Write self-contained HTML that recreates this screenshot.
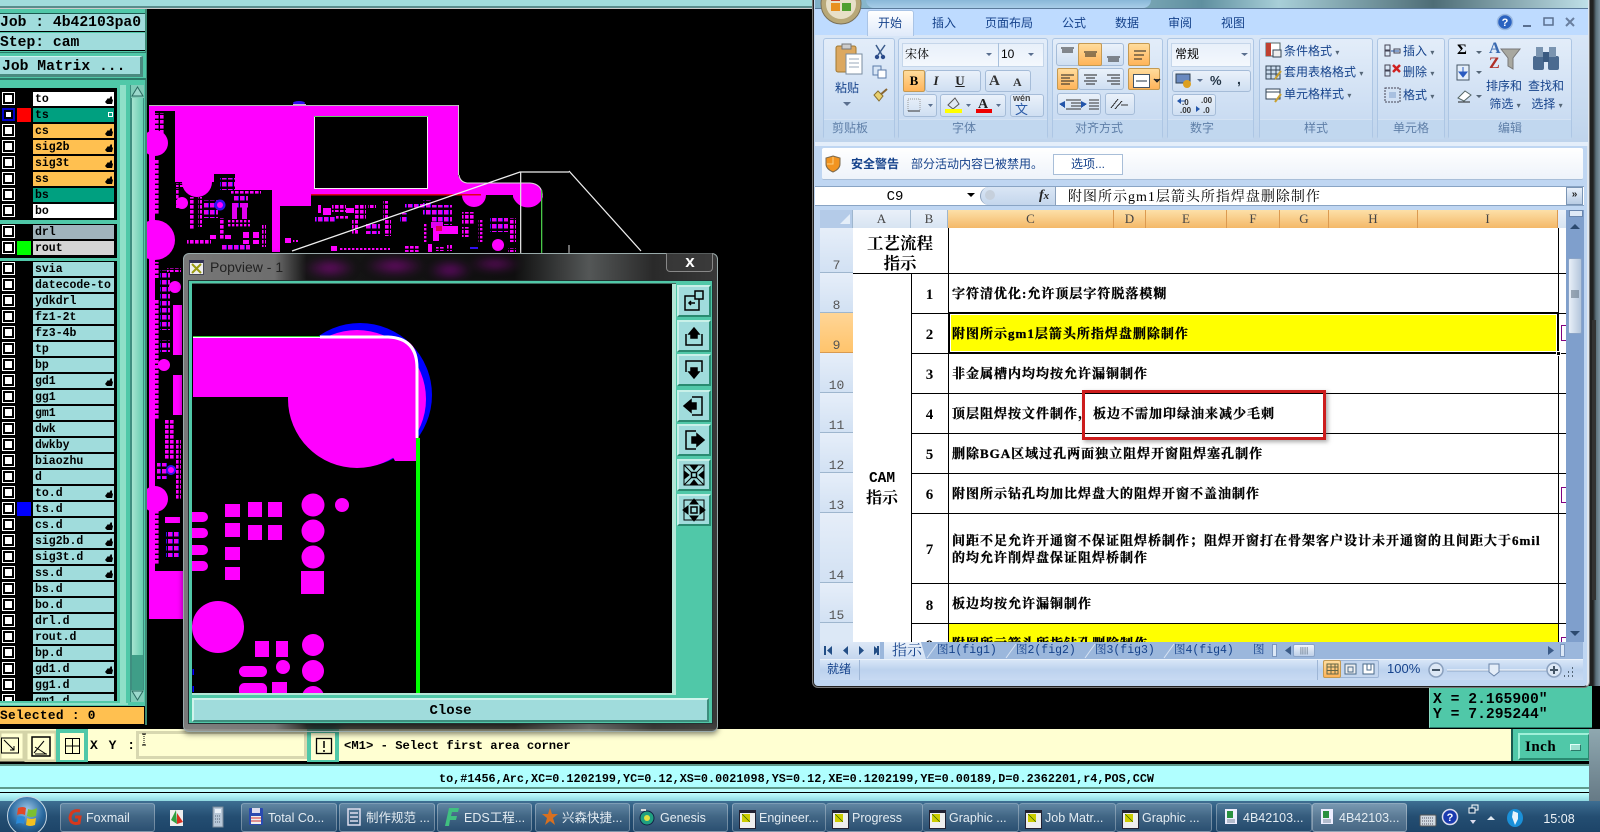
<!DOCTYPE html>
<html><head><meta charset="utf-8"><title>Genesis CAM</title>
<style>
html,body{margin:0;padding:0;background:#000;width:1600px;height:832px;overflow:hidden}
div,span,svg{position:absolute;white-space:nowrap;box-sizing:border-box}
.m{font-family:"Liberation Mono",monospace;font-weight:bold;color:#000}
.cell{font-family:"Liberation Serif","Noto Serif CJK SC",serif;font-weight:bold;font-size:13px;letter-spacing:1px;color:#000;line-height:16px;-webkit-text-stroke:.3px #000;margin-top:2px}
.ui{font-family:"Liberation Sans","Noto Sans CJK SC",sans-serif;font-size:12px;color:#15428b;line-height:16px}
.ctr{transform:translateX(-50%)}
.r{left:33px;width:81px;height:14px;background:#a0dcdc;font:bold 11.5px/15px "Liberation Mono",monospace;padding-left:2px;color:#000}
.c{left:2px;width:13px;height:13px;background:#fff}
.c:after{content:"";position:absolute;left:1px;top:1px;width:11px;height:11px;border:2px solid #000;box-sizing:border-box;background:#fff}
.c.bl{background:#00c}
.c.bl:after{left:2px;top:2px;width:9px;height:9px;background:#fff;border-color:#000}
.s{left:17px;width:14px;height:14px}
.rh{left:820px;width:33px;background:linear-gradient(#e6eef9,#d2e1f3);border-bottom:1px solid #9eb6ce;font:13px/14px "Liberation Mono",monospace;color:#555;text-align:center}
.rh span{position:absolute;bottom:0;left:0;width:33px;text-align:center}
.ch{top:210px;height:18px;border-right:1px solid #dc9a50;background:linear-gradient(#fde0a8,#f4b868);font:13px/18px "Liberation Serif",serif;color:#444;text-align:center}
.hl{left:911px;width:655px;height:1px;background:#000}
.num{left:911px;width:37px;text-align:center;font:bold 15px/18px "Liberation Serif",serif;color:#000;margin-top:2px}
.g{top:38px;height:101px;border:1px solid #adc6e4;border-radius:3px;background:linear-gradient(#e3edf9,#cadcf2 80%)}
.gl{top:119px;height:20px;background:#c1d7ef;border-top:1px solid #d4e2f3}
.gt{top:120px;color:#5f7fa8}
.b{background:linear-gradient(#eaf1fa,#cfdff2);border:1px solid #a5bcd8;border-radius:3px}
.o{background:linear-gradient(#ffdc9c,#ffb45a);border:1px solid #c59a52;border-radius:2px}
.tb{top:803px;height:29px;border:1px solid rgba(255,255,255,.3);border-radius:3px;background:linear-gradient(rgba(255,255,255,.2),rgba(255,255,255,.06));font:12.5px/28px "Liberation Sans","Noto Sans CJK SC",sans-serif;color:#e4ecf2;padding-left:26px;overflow:hidden}
.tb i{position:absolute;left:6px;top:6px;width:15px;height:15px;display:block}
.x{background:#eee;border:1px solid #223;border-top:3px solid #223}
.x:after{content:"";position:absolute;left:2px;top:1px;width:8px;height:8px;background:linear-gradient(45deg,#cc0 45%,#250 50%,#cc0 55%)}
.p{left:677px;width:34px;height:32px;background:#a0dcdc;border:2px solid;border-color:#c8f0e8 #2a8a70 #2a8a70 #c8f0e8}
.p svg{left:2px;top:1px;width:26px;height:26px}
.tabtxt{top:642px;font:11.5px/17px "Liberation Mono","Noto Serif CJK SC",serif;color:#15428b}
</style></head><body>

<!-- top strip -->
<div style="left:0;top:0;width:814px;height:6px;background:#a0dcdc"></div>
<div style="left:0;top:6px;width:814px;height:2px;background:#5a8c8c"></div>
<div style="left:0;top:8px;width:814px;height:1px;background:#ccc"></div>

<!-- PCB -->
<svg style="left:0;top:0" width="1600" height="832" viewBox="0 0 1600 832">
<defs>
<pattern id="d1" width="5" height="5" patternUnits="userSpaceOnUse"><rect width="3.6" height="3.6" fill="#f0f"/></pattern>
<pattern id="d2" width="6" height="7" patternUnits="userSpaceOnUse"><rect width="4" height="4.5" fill="#e800f0"/><rect x="4" width="1" height="4.5" fill="#3010f0"/></pattern>
<pattern id="d3" width="4" height="4" patternUnits="userSpaceOnUse"><rect width="2.4" height="2.4" fill="#f0f"/></pattern>
</defs>
<path fill="#f0f" d="M149 105H458V175Q460 182 467 183H530Q543 184 543 197A16 16 0 0 1 513 197V195H486A12 12 0 0 1 462 195H311V206H280V252H272V190H235V174H214V182H212A15 15 0 0 1 182 182H175V111H154V560L149 619H182V571H154L149 560Z"/>
<rect x="149" y="105" width="6" height="514" fill="#f0f"/>
<rect x="150" y="571" width="33" height="48" fill="#f0f"/>
<ellipse cx="299" cy="103" rx="6" ry="2" fill="#3010f0"/>
<rect x="293" y="104" width="13" height="2" fill="#e8a0f0"/>
<rect x="149" y="105" width="309" height="1" fill="#b8b8b8"/>
<rect x="458" y="105" width="1" height="70" fill="#ccc"/>
<path d="M459 175Q460 182 467 183H530Q542 184 542 195" fill="none" stroke="#ddd"/>
<rect x="314.500" y="116.500" width="113" height="72" fill="#000" stroke="#eee"/>
<rect x="314" y="116" width="114" height="1" fill="#6c6"/>
<rect x="311" y="194" width="170" height="1.500" fill="#e00020"/>
<!-- lobes left -->
<circle cx="155" cy="143" r="13" fill="#f0f"/>
<circle cx="155" cy="240" r="20" fill="#f0f"/>
<circle cx="155" cy="499" r="13" fill="#f0f"/>
<circle cx="182" cy="203" r="6" fill="#f0f"/>
<circle cx="175" cy="287" r="6" fill="#f0f"/>
<rect x="173" y="305" width="9" height="50" fill="#f0f"/>
<rect x="173" y="375" width="9" height="40" fill="#f0f"/>
<circle cx="164" cy="365" r="6" fill="#f0f"/>
<!-- dot clusters -->
<rect x="155" y="113" width="10" height="22" fill="url(#d1)"/>
<rect x="155" y="160" width="5" height="55" fill="url(#d1)"/>
<rect x="155" y="262" width="5" height="16" fill="url(#d1)"/>
<rect x="176" y="183" width="10" height="4" fill="url(#d1)"/>
<rect x="176" y="188" width="4" height="20" fill="url(#d1)"/>
<rect x="190" y="197" width="5" height="32" fill="url(#d1)"/>
<rect x="198" y="197" width="4" height="30" fill="url(#d1)"/>
<rect x="203" y="200" width="15" height="18" fill="url(#d2)"/>
<circle cx="220" cy="205" r="5.500" fill="#3010f0"/><circle cx="220" cy="205" r="3" fill="#f0f"/>
<rect x="220" y="178" width="15" height="12" fill="url(#d2)"/>
<rect x="231" y="191" width="30" height="4" fill="url(#d1)"/>
<rect x="233" y="196" width="15" height="12" fill="url(#d2)"/>
<rect x="232" y="203" width="5" height="16" fill="#e000f0"/><rect x="242" y="203" width="5" height="16" fill="#e000f0"/>
<rect x="227" y="220" width="23" height="8" fill="url(#d3)"/>
<rect x="220" y="218" width="4" height="22" fill="url(#d1)"/>
<rect x="243" y="232" width="6" height="6" fill="#f0f"/><rect x="253" y="232" width="6" height="6" fill="#f0f"/>
<rect x="243" y="240" width="6" height="4" fill="#f0f"/><rect x="253" y="240" width="6" height="4" fill="#f0f"/>
<rect x="262" y="225" width="4" height="22" fill="url(#d1)"/>
<rect x="187" y="240" width="24" height="4" fill="url(#d1)"/>
<rect x="222" y="245" width="28" height="6" fill="url(#d2)"/>
<rect x="210" y="235" width="6" height="4" fill="#f0f"/><rect x="225" y="235" width="6" height="4" fill="#f0f"/>
<rect x="285" y="238" width="6" height="5" fill="#f0f"/><rect x="293" y="240" width="5" height="2" fill="url(#d3)"/>
<rect x="318" y="205" width="3" height="8" fill="#f0f"/>
<rect x="323" y="208" width="8" height="7" fill="#f0f"/>
<rect x="332" y="204" width="14" height="8" fill="url(#d1)"/>
<rect x="346" y="208" width="8" height="5" fill="#f0f"/>
<rect x="315" y="216" width="20" height="8" fill="url(#d2)"/>
<rect x="336" y="216" width="12" height="4" fill="url(#d1)"/>
<rect x="355" y="205" width="11" height="14" fill="url(#d1)"/>
<rect x="368" y="204" width="8" height="4" fill="url(#d1)"/>
<rect x="383" y="201" width="5" height="20" fill="url(#d1)"/>
<rect x="405" y="204" width="20" height="5" fill="url(#d2)"/>
<rect x="423" y="200" width="8" height="16" fill="url(#d2)"/>
<rect x="432" y="205" width="20" height="20" fill="url(#d2)"/>
<rect x="385" y="220" width="6" height="16" fill="url(#d1)"/>
<rect x="365" y="222" width="15" height="12" fill="url(#d2)"/>
<rect x="352" y="220" width="6" height="14" fill="url(#d1)"/>
<rect x="400" y="213" width="8" height="10" fill="url(#d2)"/>
<rect x="462" y="212" width="12" height="12" fill="url(#d1)"/>
<rect x="462" y="227" width="8" height="10" fill="url(#d1)"/>
<rect x="478" y="220" width="6" height="22" fill="url(#d3)"/>
<rect x="490" y="218" width="18" height="14" fill="url(#d2)"/>
<rect x="510" y="218" width="6" height="24" fill="url(#d1)"/>
<rect x="433" y="227" width="6" height="14" fill="#f0f"/>
<rect x="431" y="222" width="12" height="6" fill="#e000f0"/>
<rect x="436" y="226" width="22" height="8" fill="#f0f"/><rect x="436" y="226" width="6" height="5" fill="#e0005a"/>
<rect x="424" y="224" width="3" height="18" fill="url(#d3)"/>
<circle cx="498" cy="245" r="6" fill="#f0f"/>
<rect x="331" y="246" width="6" height="5" fill="#f0f"/>
<rect x="340" y="248" width="50" height="2" fill="url(#d3)"/>
<rect x="405" y="246" width="14" height="6" fill="url(#d1)"/>
<rect x="428" y="244" width="4" height="8" fill="#f0f"/><rect x="436" y="247" width="8" height="4" fill="url(#d1)"/><rect x="447" y="245" width="5" height="6" fill="url(#d1)"/>
<rect x="470" y="247" width="8" height="2" fill="#3010f0"/>
<rect x="508" y="248" width="8" height="4" fill="url(#d1)"/>
<rect x="160" y="270" width="10" height="60" fill="url(#d2)"/>
<rect x="167" y="268" width="14" height="4" fill="url(#d1)"/>
<rect x="155" y="300" width="5" height="120" fill="url(#d1)"/>
<rect x="160" y="340" width="10" height="12" fill="url(#d2)"/>
<rect x="165" y="420" width="10" height="40" fill="url(#d1)"/>
<rect x="157" y="463" width="10" height="16" fill="url(#d2)"/>
<circle cx="171" cy="470" r="5" fill="#3010f0"/><circle cx="171" cy="470" r="3" fill="#f0f"/>
<rect x="155" y="505" width="4" height="60" fill="url(#d1)"/>
<rect x="165" y="517" width="15" height="6" fill="#f0f"/>
<rect x="166" y="532" width="14" height="25" fill="url(#d2)"/>
<rect x="176" y="440" width="5" height="60" fill="url(#d1)"/>
<!-- selection lines -->
<path d="M292 251L520 172H569M569 171L641 251" fill="none" stroke="#eee" stroke-width="1.300"/>
<rect x="520" y="172" width="1.300" height="82" fill="#ddd"/>
<rect x="541" y="190" width="1.300" height="64" fill="#49c949"/>
<path d="M569 245V253" stroke="#ddd"/>
</svg>

<!-- left panel -->
<div style="left:0;top:9px;width:147px;height:716px;background:#50c8a8;border-right:2px solid #3e8a76"></div>
<div style="left:0;top:13px;width:145px;height:19px;background:#a0dcdc;border-bottom:1px solid #000;border-top:1px solid #1a5a50"></div>
<div class="m" style="left:0;top:14px;font-size:14.700px;line-height:18px">Job : 4b42103pa0</div>
<div style="left:0;top:33px;width:145px;height:18px;background:#a0dcdc;border-bottom:1px solid #000"></div>
<div class="m" style="left:0;top:34px;font-size:14.700px;line-height:18px">Step: cam</div>
<div style="left:0;top:52px;width:146px;height:28px;background:#50c8a8;border-top:1px solid #2a7a68;border-bottom:2px solid #2a7a68"></div>
<div style="left:0;top:56px;width:143px;height:21px;background:#a0dcdc;border-right:3px solid #4a8a80;border-bottom:3px solid #4a8a80;border-top:1px solid #d0f4f0"></div>
<div class="m" style="left:2px;top:57px;font-size:14.700px;line-height:20px">Job Matrix ...</div>

<div style="left:0;top:88px;width:117px;height:132px;background:#000"></div>
<div style="left:0;top:224px;width:117px;height:34px;background:#000"></div>
<div style="left:0;top:261px;width:117px;height:440px;background:#000;overflow:hidden"></div>
<div style="left:120px;top:85px;width:6px;height:618px;background:#8fe0c8"></div>
<div style="left:0;top:703px;width:128px;height:2px;background:#8fe0c8"></div>
<div style="left:130px;top:85px;width:14px;height:617px;background:#3f8e80"></div>
<div style="left:132px;top:98px;width:11px;height:557px;background:linear-gradient(90deg,#a6e4d0,#66cdb0)"></div>
<div style="left:132px;top:655px;width:11px;height:35px;background:#3f9e88"></div>
<svg style="left:131px;top:85px" width="13" height="13"><rect width="13" height="13" fill="#80ccb8"/><path d="M6.500 2L1 11H12Z" fill="#9cd8cc" stroke="#2a6a60"/></svg>
<svg style="left:131px;top:690px" width="13" height="12"><rect width="13" height="12" fill="#80ccb8"/><path d="M6.500 10L1 1H12Z" fill="#9cd8cc" stroke="#2a6a60"/></svg>

<!-- layer rows -->
<div class="c" style="top:92px"></div><div class="r" style="top:92px;background:#fff">to</div>
<div class="c bl" style="top:108px"></div><div class="s" style="top:108px;background:#f00"></div><div class="r" style="top:108px;background:#00a080">ts</div>
<div class="c" style="top:124px"></div><div class="r" style="top:124px;background:#ffc050">cs</div>
<div class="c" style="top:140px"></div><div class="r" style="top:140px;background:#ffc050">sig2b</div>
<div class="c" style="top:156px"></div><div class="r" style="top:156px;background:#ffc050">sig3t</div>
<div class="c" style="top:172px"></div><div class="r" style="top:172px;background:#ffc050">ss</div>
<div class="c" style="top:188px"></div><div class="r" style="top:188px;background:#00a080">bs</div>
<div class="c" style="top:204px"></div><div class="r" style="top:204px;background:#fff">bo</div>
<div class="c" style="top:225px"></div><div class="r" style="top:225px;background:#a0b4bc">drl</div>
<div class="c" style="top:241px"></div><div class="s" style="top:241px;background:#0f0"></div><div class="r" style="top:241px;background:#d4d4d4">rout</div>
<div class="c" style="top:262px"></div><div class="r" style="top:262px">svia</div>
<div class="c" style="top:278px"></div><div class="r" style="top:278px">datecode-to</div>
<div class="c" style="top:294px"></div><div class="r" style="top:294px">ydkdrl</div>
<div class="c" style="top:310px"></div><div class="r" style="top:310px">fz1-2t</div>
<div class="c" style="top:326px"></div><div class="r" style="top:326px">fz3-4b</div>
<div class="c" style="top:342px"></div><div class="r" style="top:342px">tp</div>
<div class="c" style="top:358px"></div><div class="r" style="top:358px">bp</div>
<div class="c" style="top:374px"></div><div class="r" style="top:374px">gd1</div>
<div class="c" style="top:390px"></div><div class="r" style="top:390px">gg1</div>
<div class="c" style="top:406px"></div><div class="r" style="top:406px">gm1</div>
<div class="c" style="top:422px"></div><div class="r" style="top:422px">dwk</div>
<div class="c" style="top:438px"></div><div class="r" style="top:438px">dwkby</div>
<div class="c" style="top:454px"></div><div class="r" style="top:454px">biaozhu</div>
<div class="c" style="top:470px"></div><div class="r" style="top:470px">d</div>
<div class="c" style="top:486px"></div><div class="r" style="top:486px">to.d</div>
<div class="c" style="top:502px"></div><div class="s" style="top:502px;background:#00f"></div><div class="r" style="top:502px">ts.d</div>
<div class="c" style="top:518px"></div><div class="r" style="top:518px">cs.d</div>
<div class="c" style="top:534px"></div><div class="r" style="top:534px">sig2b.d</div>
<div class="c" style="top:550px"></div><div class="r" style="top:550px">sig3t.d</div>
<div class="c" style="top:566px"></div><div class="r" style="top:566px">ss.d</div>
<div class="c" style="top:582px"></div><div class="r" style="top:582px">bs.d</div>
<div class="c" style="top:598px"></div><div class="r" style="top:598px">bo.d</div>
<div class="c" style="top:614px"></div><div class="r" style="top:614px">drl.d</div>
<div class="c" style="top:630px"></div><div class="r" style="top:630px">rout.d</div>
<div class="c" style="top:646px"></div><div class="r" style="top:646px">bp.d</div>
<div class="c" style="top:662px"></div><div class="r" style="top:662px">gd1.d</div>
<div class="c" style="top:678px"></div><div class="r" style="top:678px">gg1.d</div>
<div style="left:0;top:694px;width:117px;height:7px;overflow:hidden"><div class="c" style="top:0"></div><div class="r" style="top:0">gm1.d</div></div>
<svg style="left:0;top:0;pointer-events:none" width="120" height="700" fill="#000">
<path d="M105 102l3-4 1 1 2-3 1 1v2l1 1-1 4h-5z"/>
<path d="M105 134l3-4 1 1 2-3 1 1v2l1 1-1 4h-5z"/><path d="M105 150l3-4 1 1 2-3 1 1v2l1 1-1 4h-5z"/><path d="M105 166l3-4 1 1 2-3 1 1v2l1 1-1 4h-5z"/><path d="M105 182l3-4 1 1 2-3 1 1v2l1 1-1 4h-5z"/>
<path d="M105 384l3-4 1 1 2-3 1 1v2l1 1-1 4h-5z"/><path d="M105 496l3-4 1 1 2-3 1 1v2l1 1-1 4h-5z"/><path d="M105 528l3-4 1 1 2-3 1 1v2l1 1-1 4h-5z"/><path d="M105 544l3-4 1 1 2-3 1 1v2l1 1-1 4h-5z"/><path d="M105 560l3-4 1 1 2-3 1 1v2l1 1-1 4h-5z"/><path d="M105 576l3-4 1 1 2-3 1 1v2l1 1-1 4h-5z"/><path d="M105 672l3-4 1 1 2-3 1 1v2l1 1-1 4h-5z"/>
<rect x="108.500" y="112.500" width="4" height="4" fill="none" stroke="#fff"/>
</svg>

<!-- selected -->
<div style="left:0;top:706px;width:145px;height:19px;background:#ffc050;border-bottom:1px solid #000;border-right:1px solid #000;border-top:1px solid #000"></div>
<div class="m" style="left:0;top:706px;font-size:12.800px;line-height:19px;letter-spacing:.3px">Selected : 0</div>

<!-- bottom cream bar -->
<div style="left:0;top:729px;width:1600px;height:33px;background:#ffffd2"></div>
<div style="left:0;top:761px;width:1600px;height:3px;background:#000"></div>
<div style="left:0;top:764px;width:1600px;height:2px;background:#5e9a8c"></div>
<svg style="left:0;top:729px" width="350" height="33" fill="none" stroke="#000">
<rect x="0" y="3" width="24" height="28" fill="#ffffd2" stroke="#d4d4a8" stroke-width="3"/>
<rect x="1.500" y="9" width="17" height="15"/><path d="M4 11L14 21M14 17V21H10"/>
<rect x="26" y="3" width="30" height="29" fill="#ffffd2" stroke="#d4d4a8" stroke-width="3"/>
<rect x="32" y="8" width="18" height="19" stroke-width="1.500"/><path d="M34 24L44 12M35 18L46 25M35 25H47"/>
<rect x="58" y="2" width="28" height="31" fill="#ffffd2" stroke="#50c8a8" stroke-width="4"/>
<rect x="65.500" y="9.500" width="14" height="15"/><path d="M72.500 9V24M65 17H80"/>
<rect x="137.500" y="3.500" width="168" height="25" fill="#ffffd2" stroke="#d8d8b0" stroke-width="3"/>
<path d="M144 5V16" stroke-dasharray="1 1"/><path d="M142 5H146M142 16H146"/>
<rect x="309" y="2" width="28" height="31" fill="#ffffd2" stroke="#50c8a8" stroke-width="4"/>
<rect x="316.500" y="9.500" width="15" height="15" stroke-width="1.300"/><path d="M324 12V19M324 21V23" stroke-width="1.500"/>
</svg>
<div class="m" style="left:90px;top:738px;font-size:13px;line-height:16px;letter-spacing:1.500px">X Y :</div>
<div class="m" style="left:344px;top:738px;font-size:12.200px;line-height:16px">&lt;M1&gt; - Select first area corner</div>
<div style="left:1511px;top:729px;width:89px;height:32px;background:#50c8a8;border-left:2px solid #1a5a50"></div>
<div style="left:1518px;top:733px;width:72px;height:27px;background:#50c8a8;border:2px solid;border-color:#a0f0d8 #2a8a70 #2a8a70 #a0f0d8"></div>
<div style="left:1525px;top:738px;font:15px/18px 'Liberation Serif',serif;font-weight:bold;letter-spacing:.5px;color:#000">Inch</div>
<div style="left:1570px;top:744px;width:11px;height:7px;background:#9ee0d0;border:1px solid;border-color:#e0fff8 #2a7a68 #2a7a68 #e0fff8"></div>

<!-- cyan status -->
<div style="left:0;top:766px;width:1589px;height:23px;background:#b0ffff;border-bottom:2px solid #5e9a8c"></div>
<div class="m" style="left:439px;top:771px;font-size:11.800px;line-height:16px">to,#1456,Arc,XC=0.1202199,YC=0.12,XS=0.0021098,YS=0.12,XE=0.1202199,YE=0.00189,D=0.2362201,r4,POS,CCW</div>
<div style="left:0;top:789px;width:1600px;height:3px;background:#c0ffff"></div>
<div style="left:0;top:792px;width:1589px;height:1px;background:#000"></div>
<div style="left:0;top:793px;width:1600px;height:8px;background:linear-gradient(#c0ffff,#8fd8e0)"></div>
<div style="left:1589px;top:729px;width:11px;height:72px;background:linear-gradient(#8fa8b0,#667a86)"></div>

<!-- coordinate box -->
<div style="left:1429px;top:686px;width:163px;height:42px;background:#50c8a8;border-left:1px solid #8adcc4;border-bottom:1px solid #2a7a68"></div>
<div class="m" style="left:1433px;top:692px;font-size:14.700px;line-height:16px">X = 2.165900"</div>
<div class="m" style="left:1433px;top:707px;font-size:14.700px;line-height:16px">Y = 7.295244"</div>

<!-- popup -->
<div style="left:183px;top:253px;width:535px;height:479px;border:1px solid #9aa;border-radius:6px;backdrop-filter:blur(5px);background:linear-gradient(90deg,rgba(150,150,150,.8) 0,rgba(140,140,140,.78) 17%,rgba(60,60,60,.35) 23%,rgba(50,50,50,.3) 62%,rgba(140,145,145,.6) 76%,rgba(60,60,60,.7) 88%,rgba(70,70,70,.8));box-shadow:0 2px 6px rgba(0,0,0,.5)"></div>
<div style="left:300px;top:256px;width:220px;height:23px;filter:blur(4px);background:radial-gradient(ellipse 26px 10px at 30px 12px,rgba(200,0,200,.5),transparent),radial-gradient(ellipse 30px 10px at 95px 10px,rgba(200,0,200,.5),transparent),radial-gradient(ellipse 22px 10px at 150px 14px,rgba(190,0,200,.5),transparent),radial-gradient(ellipse 26px 8px at 195px 8px,rgba(200,0,200,.45),transparent)"></div>
<div style="left:189px;top:260px;width:15px;height:15px;background:#eee;border:1px solid #445;border-top:3px solid #335"></div>
<svg style="left:190px;top:263px" width="13" height="11"><path d="M2 1L11 10M11 1L2 10" stroke="#9a9a10" stroke-width="2"/></svg>
<div style="left:210px;top:257px;font:14px/20px 'Liberation Sans',sans-serif;color:#222">Popview - 1</div>
<div style="left:666px;top:253px;width:47px;height:19px;border:1px solid #888;border-top:none;border-radius:0 0 4px 4px;background:rgba(60,60,60,.7)"></div>
<div style="left:680px;top:253px;width:20px;text-align:center;font:bold 17px/18px 'Liberation Sans',sans-serif;color:#fff">x</div>
<div style="left:188px;top:280px;width:525px;height:444px;background:#50c8a8;border:1px solid #233"></div>
<div style="left:192px;top:283px;width:484px;height:1px;background:#3e6a5e"></div>
<div style="left:672px;top:284px;width:4px;height:410px;background:#b4e8d8"></div>
<div style="left:192px;top:693px;width:484px;height:2px;background:#b4e8d8"></div>
<svg style="left:192px;top:284px" width="480" height="409" viewBox="192 284 480 409">
<rect x="192" y="284" width="480" height="409" fill="#000"/>
<circle cx="360" cy="395" r="72" fill="#00f"/>
<circle cx="357" cy="399" r="69" fill="#f0f"/>
<path d="M193 337H390Q418 337 418 365V461H395L360 397H193Z" fill="#f0f"/>
<path d="M385 455L400 460L418 461V430Z" fill="#f0f"/>
<path d="M193 336.500H320" stroke="#2ecb2e" stroke-width="1"/>
<path d="M193 337.500H320" stroke="#fff" stroke-width="1"/>
<path d="M320 337H388Q417 338 417 368V438" fill="none" stroke="#fff" stroke-width="3"/>
<rect x="416" y="438" width="4" height="255" fill="#0f0"/>
<rect x="193" y="512" width="15" height="10" rx="5" fill="#f0f"/><rect x="193" y="528" width="15" height="10" rx="5" fill="#f0f"/><rect x="193" y="545" width="15" height="10" rx="5" fill="#f0f"/><rect x="193" y="561" width="15" height="10" rx="5" fill="#f0f"/>
<rect x="192" y="512" width="6" height="10" fill="#f0f"/><rect x="192" y="528" width="6" height="10" fill="#f0f"/><rect x="192" y="545" width="6" height="10" fill="#f0f"/><rect x="192" y="561" width="6" height="10" fill="#f0f"/>
<rect x="225" y="504" width="15" height="13" fill="#f0f"/><rect x="225" y="523" width="15" height="14" fill="#f0f"/><rect x="225" y="547" width="15" height="13" fill="#f0f"/><rect x="225" y="567" width="15" height="13" fill="#f0f"/>
<rect x="248" y="502" width="14" height="15" fill="#f0f"/><rect x="248" y="525" width="14" height="15" fill="#f0f"/>
<rect x="268" y="502" width="14" height="15" fill="#f0f"/><rect x="268" y="525" width="14" height="15" fill="#f0f"/>
<circle cx="313" cy="505" r="11.500" fill="#f0f"/><circle cx="313" cy="531" r="11.500" fill="#f0f"/><circle cx="313" cy="557" r="11.500" fill="#f0f"/>
<circle cx="342" cy="505" r="7" fill="#f0f"/>
<rect x="301" y="571" width="23" height="23" fill="#f0f"/>
<circle cx="218" cy="627" r="26" fill="#f0f"/>
<rect x="255" y="641" width="14" height="16" fill="#f0f"/><rect x="276" y="641" width="12" height="16" fill="#f0f"/>
<circle cx="313" cy="645" r="11" fill="#f0f"/><circle cx="313" cy="671" r="11" fill="#f0f"/><circle cx="283" cy="667" r="7" fill="#f0f"/>
<rect x="239" y="666" width="28" height="11" rx="5.500" fill="#f0f"/><rect x="239" y="683" width="28" height="14" rx="5.500" fill="#f0f"/>
<rect x="272" y="682" width="15" height="12" fill="#f0f"/>
<circle cx="313" cy="697" r="11" fill="#f0f"/>
<rect x="192.500" y="669" width="1.500" height="6" fill="#00f"/><rect x="192.500" y="686" width="1.500" height="6" fill="#00f"/>
</svg>
<!-- popup toolbar -->
<div class="p" style="top:285px"><svg viewBox="0 0 26 26" fill="none" stroke="#000" stroke-width="1.500"><rect x="4" y="8" width="14" height="14"/><rect x="14" y="3" width="8" height="8" fill="#a0dcdc"/><path d="M14 15H8M10 13L8 15L10 17"/></svg></div>
<div class="p" style="top:320px"><svg viewBox="0 0 26 26" fill="#000" stroke="#000" stroke-width="1.500"><path d="M8 11L13 5L18 11H16V15H10V11Z"/><path d="M5 11V22H21V11" fill="none"/></svg></div>
<div class="p" style="top:354px"><svg viewBox="0 0 26 26" fill="#000" stroke="#000" stroke-width="1.500"><path d="M8 15L13 21L18 15H16V11H10V15Z"/><path d="M5 15V4H21V15" fill="none"/></svg></div>
<div class="p" style="top:390px"><svg viewBox="0 0 26 26" fill="#000" stroke="#000" stroke-width="1.500"><path d="M3 13L10 7V19Z"/><rect x="10" y="10" width="5" height="6"/><path d="M11 4H21V22H11" fill="none"/></svg></div>
<div class="p" style="top:424px"><svg viewBox="0 0 26 26" fill="#000" stroke="#000" stroke-width="1.500"><path d="M23 13L16 7V19Z"/><rect x="11" y="10" width="5" height="6"/><path d="M15 4H5V22H15" fill="none"/></svg></div>
<div class="p" style="top:459px"><svg viewBox="0 0 26 26" fill="#000" stroke="#000" stroke-width="1"><path d="M3 3H23V23H3Z M3 3L23 23M23 3L3 23" fill="none"/><path d="M9 3L13 8L17 3ZM9 23L13 18L17 23ZM3 9L8 13L3 17ZM23 9L18 13L23 17Z"/><rect x="10.500" y="10.500" width="5" height="5" fill="#a0dcdc" stroke-width="1.500"/></svg></div>
<div class="p" style="top:494px"><svg viewBox="0 0 26 26" fill="#000" stroke="#000" stroke-width="1"><path d="M3 3H23V23H3Z" fill="none"/><path d="M9 7L13 2L17 7ZM9 19L13 24L17 19ZM7 9L2 13L7 17ZM19 9L24 13L19 17Z"/><rect x="10" y="10" width="6" height="6" fill="#a0dcdc" stroke-width="1.500"/></svg></div>
<div style="left:192px;top:698px;width:517px;height:24px;background:#a0dcdc;border:2px solid;border-color:#d0f4ec #3e8e7e #3e8e7e #d0f4ec"></div>
<div style="left:192px;top:699px;width:517px;height:24px;text-align:center;font:bold 14px/24px 'Liberation Mono',monospace;color:#000">Close</div>

<!-- EXCEL -->
<div style="left:813px;top:0;width:776px;height:687px;background:#bfd6f2;border:1px solid #222;border-right:2px solid #dfe6ee;border-top:none;border-radius:0 0 5px 5px;box-shadow:0 0 0 1px #777"></div>
<div style="left:1590px;top:0;width:10px;height:686px;background:linear-gradient(90deg,#222 30%,#5a6f7a 60%,#7d93a0)"></div>
<div style="left:1592px;top:320px;width:4px;height:280px;background:#333"></div>
<div style="left:815px;top:0;width:773px;height:9px;background:linear-gradient(90deg,#7fb0c8,#a4ccd8 30%,#5f8f9f 50%,#a8cfd8 60%,#4e6d76 80%,#bfe0e8)"></div>
<div style="left:866px;top:0;width:285px;height:8px;background:linear-gradient(#89b8d8,#a8cde8);border-radius:0 0 10px 10px"></div>
<div style="left:815px;top:8px;width:773px;height:27px;background:#bedbff;border-top:1px solid #5a7a9a"></div>
<div style="left:815px;top:35px;width:773px;height:107px;background:linear-gradient(#d8e6f7,#bfd4ec)"></div>
<div style="left:815px;top:142px;width:773px;height:4px;background:#e4eefa"></div>
<!-- tabs -->
<div style="left:867px;top:10px;width:47px;height:26px;background:linear-gradient(#fff,#dfeafa);border:1px solid #a9c4e6;border-bottom:none;border-radius:3px 3px 0 0"></div>
<div class="ui ctr" style="left:890px;top:15px">开始</div>
<div class="ui ctr" style="left:944px;top:15px">插入</div>
<div class="ui ctr" style="left:1009px;top:15px">页面布局</div>
<div class="ui ctr" style="left:1074px;top:15px">公式</div>
<div class="ui ctr" style="left:1127px;top:15px">数据</div>
<div class="ui ctr" style="left:1180px;top:15px">审阅</div>
<div class="ui ctr" style="left:1233px;top:15px">视图</div>
<!-- office button -->
<svg style="left:820px;top:0" width="46" height="26"><circle cx="21" cy="4" r="20" fill="#b8a878" stroke="#7a7058"/><circle cx="21" cy="4" r="15" fill="#e8e0c8"/>
<rect x="11" y="3" width="9" height="8" fill="#e89020"/><rect x="22" y="3" width="9" height="8" fill="#50a030"/><rect x="11" y="-7" width="9" height="8" fill="#c84020"/></svg>
<!-- right controls -->
<svg style="left:1495px;top:12px" width="90" height="20"><circle cx="10" cy="10" r="7.500" fill="#2a62c0" stroke="#9ab8e0" stroke-width="1.500"/><text x="10" y="14" text-anchor="middle" fill="#fff" font-family="Liberation Sans" font-weight="bold" font-size="11">?</text><rect x="28" y="13" width="8" height="2" fill="#5a6f8f"/><rect x="49" y="6" width="9" height="7" fill="none" stroke="#5a6f8f" stroke-width="1.500"/><path d="M71 6L79 14M79 6L71 14" stroke="#6a7f9f" stroke-width="2"/></svg>
<!-- groups -->
<div class="g" style="left:823px;width:72px"></div><div class="gl" style="left:824px;width:70px"></div>
<div class="g" style="left:898px;width:150px"></div><div class="gl" style="left:899px;width:148px"></div>
<div class="g" style="left:1052px;width:111px"></div><div class="gl" style="left:1053px;width:109px"></div>
<div class="g" style="left:1167px;width:87px"></div><div class="gl" style="left:1168px;width:85px"></div>
<div class="g" style="left:1259px;width:114px"></div><div class="gl" style="left:1260px;width:112px"></div>
<div class="g" style="left:1377px;width:68px"></div><div class="gl" style="left:1378px;width:66px"></div>
<div class="g" style="left:1448px;width:124px"></div><div class="gl" style="left:1449px;width:122px"></div>
<div class="ui gt ctr" style="left:850px">剪贴板</div>
<div class="ui gt ctr" style="left:964px">字体</div>
<div class="ui gt ctr" style="left:1099px">对齐方式</div>
<div class="ui gt ctr" style="left:1202px">数字</div>
<div class="ui gt ctr" style="left:1316px">样式</div>
<div class="ui gt ctr" style="left:1411px">单元格</div>
<div class="ui gt ctr" style="left:1510px">编辑</div>
<!-- clipboard -->
<svg style="left:833px;top:42px" width="62" height="70"><rect x="3" y="4" width="20" height="26" rx="2" fill="#dca860" stroke="#a07830"/><rect x="9" y="2" width="9" height="5" fill="#ccc" stroke="#777"/><path d="M13 12H29V32H13Z" fill="#fff" stroke="#7a8ca0"/><path d="M16 17H26M16 21H26M16 25H26" stroke="#9ab"/>
<path d="M43 3L49 13M52 3L45 13" stroke="#3a5a8a" stroke-width="1.500"/><circle cx="44" cy="15" r="2.200" fill="#2a4a8a"/><circle cx="50" cy="15" r="2.200" fill="#2a4a8a"/>
<rect x="40" y="24" width="8" height="9" fill="#d8e6f6" stroke="#5a7aa8"/><rect x="45" y="28" width="8" height="8" fill="#fff" stroke="#5a7aa8"/>
<path d="M46 54L54 47" stroke="#886633" stroke-width="2"/><path d="M41 53L46 59L50 54L45 49Z" fill="#e8d070" stroke="#887030"/></svg>
<div class="ui ctr" style="left:847px;top:80px">粘贴</div>
<svg style="left:842px;top:101px" width="10" height="6"><path d="M1 1H9L5 5Z" fill="#5a6f8f"/></svg>
<!-- font group -->
<div style="left:902px;top:43px;width:142px;height:24px;background:linear-gradient(#e8f0fa,#f4f8fd);border:1px solid #c5d6ea"></div>
<div style="left:998px;top:43px;width:1px;height:24px;background:#a8c0dc"></div>
<div style="left:905px;top:46px;font:12px/16px 'Noto Serif CJK SC',serif;color:#000">宋体</div>
<div style="left:1001px;top:46px;font:12px/16px 'Liberation Sans',sans-serif;color:#000">10</div>
<svg style="left:985px;top:52px" width="60" height="6" fill="#5a6f8f"><path d="M1 1H7L4 4Z M43 1H49L46 4Z"/></svg>
<div class="o" style="left:903px;top:70px;width:22px;height:22px;text-align:center;font:bold 13px/20px 'Liberation Serif',serif;color:#000">B</div>
<div class="b" style="left:925px;top:70px;width:56px;height:22px"></div>
<div style="left:930px;top:71px;width:12px;text-align:center;font:italic bold 13px/20px 'Liberation Serif',serif;color:#222">I</div>
<div style="left:954px;top:71px;width:12px;text-align:center;font:bold 13px/20px 'Liberation Serif',serif;color:#222;text-decoration:underline">U</div>
<div class="b" style="left:985px;top:70px;width:46px;height:22px"></div>
<div style="left:989px;top:70px;font:bold 15px/22px 'Liberation Serif',serif;color:#333">A</div>
<div style="left:1013px;top:72px;font:bold 12px/20px 'Liberation Serif',serif;color:#333">A</div>
<div class="b" style="left:903px;top:94px;width:34px;height:23px"></div>
<svg style="left:907px;top:98px" width="28" height="15"><rect x="1" y="1" width="12" height="12" fill="none" stroke="#999" stroke-dasharray="1 1"/><path d="M1 13H13" stroke="#333"/><path d="M21 6H26L23.500 9Z" fill="#5a6f8f"/></svg>
<div class="b" style="left:940px;top:94px;width:66px;height:23px"></div>
<svg style="left:944px;top:96px" width="62" height="19"><path d="M4 9L11 2L15 8L9 13Z" fill="#dfe8f4" stroke="#555"/><rect x="1" y="13" width="17" height="4" fill="#ff0"/><path d="M22 8H27L24.500 11Z" fill="#5a6f8f"/><text x="34" y="12" font-family="Liberation Serif" font-weight="bold" font-size="14" fill="#222">A</text><rect x="32" y="13" width="16" height="4" fill="#e00"/><path d="M52 8H57L54.500 11Z" fill="#5a6f8f"/></svg>
<div class="b" style="left:1010px;top:94px;width:34px;height:23px"></div>
<div style="left:1013px;top:92px;font:9px/12px 'Liberation Sans',sans-serif;font-weight:bold;color:#444">wén</div>
<div style="left:1015px;top:101px;font:13px/15px 'Noto Sans CJK SC',sans-serif;color:#2a5aa8">文</div>
<!-- alignment -->
<div class="b" style="left:1056px;top:43px;width:68px;height:23px"></div>
<div class="o" style="left:1078px;top:43px;width:24px;height:23px"></div>
<div class="o" style="left:1128px;top:43px;width:22px;height:23px"></div>
<div class="o" style="left:1057px;top:68px;width:21px;height:22px"></div>
<div class="b" style="left:1078px;top:68px;width:46px;height:22px"></div>
<div class="o" style="left:1128px;top:68px;width:32px;height:22px"></div>
<div class="b" style="left:1057px;top:93px;width:44px;height:22px"></div>
<div class="b" style="left:1105px;top:93px;width:30px;height:22px"></div>
<svg style="left:1056px;top:43px" width="110" height="74" stroke="#222" stroke-width="1" shape-rendering="crispEdges">
<path d="M5 5H18M6 7H17M6 9H17"/><path d="M28 9H41M29 11H40M29 13H40"/><path d="M51 14H64M52 16H63M52 18H63"/>
<path d="M5 32H18M5 35H14M5 38H18M5 41H14"/><path d="M28 32H41M30 35H39M28 38H41M30 41H39"/><path d="M51 32H64M55 35H64M51 38H64M55 41H64"/>
<path d="M78 8H90M78 12H88M78 16H86"/><rect x="77.500" y="31.500" width="16" height="13" fill="#fff" stroke="#456"/><path d="M80 38H91" stroke="#234"/>
<path d="M98 36L101 39L104 36" fill="#333"/>
<path d="M10 57H25M15 60H25M15 63H25M10 66H25" stroke="#333"/><path d="M3 61L9 58V65Z" fill="#25a" stroke="none"/>
<path d="M33 57H43M33 60H43M33 63H43M33 66H43" stroke="#333"/><path d="M31 61L25 58V65Z" fill="#25a" stroke="none"/>
<path d="M55 65L62 56M59 66L66 58M65 62L72 62" stroke="#333"/>
</svg>
<!-- number -->
<div style="left:1171px;top:43px;width:80px;height:24px;background:linear-gradient(#e8f0fa,#f4f8fd);border:1px solid #c5d6ea"></div>
<div style="left:1175px;top:46px;font:12px/16px 'Noto Sans CJK SC',sans-serif;color:#000">常规</div>
<svg style="left:1240px;top:52px" width="9" height="5"><path d="M1 1H8L4.500 4Z" fill="#5a6f8f"/></svg>
<div class="b" style="left:1172px;top:70px;width:79px;height:22px"></div>
<svg style="left:1175px;top:73px" width="32" height="16"><rect x="1" y="1" width="14" height="9" fill="#6a8ac0" stroke="#345"/><circle cx="12" cy="11" r="4" fill="#dda020"/><path d="M22 6H28L25 9Z" fill="#5a6f8f"/></svg>
<div style="left:1210px;top:72px;font:bold 13px/18px 'Liberation Sans',sans-serif;color:#234">%</div>
<div style="left:1237px;top:70px;font:bold 14px/18px 'Liberation Sans',sans-serif;color:#234">,</div>
<div class="b" style="left:1172px;top:94px;width:44px;height:22px"></div>
<svg style="left:1172px;top:94px" width="46" height="22"><path d="M5 7L9 4V10Z" fill="#25a"/><path d="M9 7H14" stroke="#25a"/><text x="10" y="11" font-size="8" font-weight="bold" font-family="Liberation Sans" fill="#333">.0</text><text x="8" y="19" font-size="8" font-weight="bold" font-family="Liberation Sans" fill="#333">.00</text><path d="M24 15L28 12V18Z" fill="#25a" transform="rotate(180 26 15)"/><text x="29" y="9" font-size="8" font-weight="bold" font-family="Liberation Sans" fill="#333">.00</text><text x="31" y="19" font-size="8" font-weight="bold" font-family="Liberation Sans" fill="#333">.0</text></svg>
<!-- styles -->
<svg style="left:1265px;top:42px" width="18" height="64" fill="none"><rect x="1" y="1" width="14" height="13" fill="#fff" stroke="#566"/><rect x="1" y="1" width="5" height="13" fill="#c04030"/><rect x="8" y="8" width="8" height="7" fill="#eee" stroke="#345"/>
<rect x="1" y="24" width="14" height="13" fill="#cde" stroke="#345"/><path d="M1 28H15M1 32H15M6 24V37M11 24V37" stroke="#345"/><path d="M10 37L16 29" stroke="#c9a030" stroke-width="2"/>
<rect x="1" y="47" width="14" height="10" fill="#fff" stroke="#345"/><path d="M1 50H15" stroke="#345"/><path d="M10 60L16 52" stroke="#c9a030" stroke-width="2"/></svg>
<div class="ui" style="left:1284px;top:43px;font-size:12px">条件格式 <span style="position:static;font-size:8px;color:#567">▾</span></div>
<div class="ui" style="left:1284px;top:64px">套用表格格式 <span style="position:static;font-size:8px;color:#567">▾</span></div>
<div class="ui" style="left:1284px;top:86px">单元格样式 <span style="position:static;font-size:8px;color:#567">▾</span></div>
<!-- cells -->
<svg style="left:1384px;top:42px" width="18" height="62" fill="none" stroke="#445"><path d="M1 3H6V8H1ZM1 9H6V14H1Z"/><path d="M7 9H15" stroke="#25a"/><rect x="10" y="7" width="6" height="4"/>
<path d="M1 23H6V28H1ZM1 29H6V34H1Z"/><path d="M9 23L16 30M16 23L9 30" stroke="#d02020" stroke-width="2.500"/>
<rect x="1" y="46" width="15" height="14" stroke-dasharray="2 1"/><rect x="5" y="50" width="7" height="6" fill="#a8c0e0" stroke="none"/></svg>
<div class="ui" style="left:1403px;top:43px">插入 <span style="position:static;font-size:8px;color:#567">▾</span></div>
<div class="ui" style="left:1403px;top:64px">删除 <span style="position:static;font-size:8px;color:#567">▾</span></div>
<div class="ui" style="left:1403px;top:87px">格式 <span style="position:static;font-size:8px;color:#567">▾</span></div>
<!-- edit -->
<div style="left:1457px;top:41px;font:bold 15px/18px 'Liberation Serif',serif;color:#000">Σ</div>
<svg style="left:1456px;top:64px" width="18" height="18"><rect x="1" y="1" width="12" height="15" fill="#e4eefa" stroke="#456"/><path d="M7 3V10M3 8L7 13L11 8Z" fill="#2a5ac0" stroke="#2a5ac0"/></svg>
<svg style="left:1456px;top:88px" width="18" height="16"><path d="M2 10L9 3L15 7L8 13Z" fill="#fff" stroke="#566"/><path d="M2 14H14" stroke="#222"/></svg>
<svg style="left:1474px;top:46px" width="12" height="60" fill="#567"><path d="M2 5H8L5 8ZM2 25H8L5 28ZM2 49H8L5 52Z"/></svg>
<div style="left:1489px;top:41px;font:bold 16px/16px 'Liberation Serif',serif;color:#3a6ab0">A</div>
<div style="left:1489px;top:56px;font:bold 16px/16px 'Liberation Serif',serif;color:#b03028">Z</div>
<svg style="left:1500px;top:47px" width="22" height="24"><path d="M1 2H20L13 11V22L8 19V11Z" fill="#a8a8a0" stroke="#777"/></svg>
<svg style="left:1531px;top:44px" width="30" height="28"><rect x="2" y="12" width="11" height="14" rx="2" fill="#4a6a90"/><rect x="17" y="12" width="11" height="14" rx="2" fill="#4a6a90"/><rect x="5" y="3" width="7" height="10" fill="#7a94b0"/><rect x="18" y="3" width="7" height="10" fill="#7a94b0"/><rect x="12" y="8" width="6" height="10" fill="#3a5a80"/></svg>
<div class="ui ctr" style="left:1504px;top:78px">排序和</div>
<div class="ui ctr" style="left:1505px;top:96px">筛选 <span style="position:static;font-size:8px;color:#567">▾</span></div>
<div class="ui ctr" style="left:1546px;top:78px">查找和</div>
<div class="ui ctr" style="left:1547px;top:96px">选择 <span style="position:static;font-size:8px;color:#567">▾</span></div>
<!-- security bar -->
<div style="left:822px;top:148px;width:761px;height:32px;background:linear-gradient(#fff,#eef3fa);border-bottom:1px solid #a8bed8;border-radius:2px"></div>
<svg style="left:825px;top:155px" width="16" height="18"><path d="M8 1L15 3V9Q15 14 8 17Q1 14 1 9V3Z" fill="#f29420" stroke="#7a6a50"/><path d="M8 2V9H2" fill="none" stroke="#ffd080"/></svg>
<div class="ui" style="left:851px;top:156px;font-weight:bold">安全警告</div>
<div class="ui" style="left:911px;top:156px">部分活动内容已被禁用。</div>
<div class="ui" style="left:1053px;top:154px;width:70px;height:21px;background:#fff;border:1px solid #a8bed8;text-align:center;line-height:19px">选项...</div>
<!-- formula bar -->
<div style="left:815px;top:186px;width:769px;height:20px;background:#fff;border-top:1px solid #89a4c4;border-bottom:1px solid #89a4c4"></div>
<div style="left:820px;top:188px;width:150px;text-align:center;font:14px/18px 'Liberation Mono',monospace;color:#000">C9</div>
<svg style="left:966px;top:192px" width="10" height="7"><path d="M1 1H9L5 5Z" fill="#000"/></svg>
<div style="left:980px;top:187px;width:76px;height:18px;background:linear-gradient(#dae6f5,#c4d6ec);border-radius:9px 0 0 9px;border-left:1px solid #8aa0bc;border-right:1px solid #8aa0bc"></div>
<div style="left:985px;top:190px;width:10px;height:10px;border-radius:50%;background:#c6d0dc"></div>
<div style="left:1039px;top:187px;font:italic bold 14px/18px 'Liberation Serif',serif;color:#222">f<span style="position:static;font-size:11px">x</span></div>
<div style="left:1068px;top:189px;font:14px/18px 'Liberation Serif','Noto Serif CJK SC',serif;letter-spacing:1px;color:#000">附图所示gm1层箭头所指焊盘删除制作</div>
<div style="left:1566px;top:187px;width:17px;height:18px;background:linear-gradient(#e8f0fa,#b8cce4);border:1px solid #7a94b4;text-align:center;font:bold 10px/14px 'Liberation Sans',sans-serif;color:#222">»</div>
<!-- grid -->
<div style="left:820px;top:210px;width:746px;height:432px;background:#fff"></div>
<div style="left:820px;top:210px;width:33px;height:18px;background:#b4cbe8;border-right:1px solid #9eb6ce"></div>
<svg style="left:840px;top:214px" width="11" height="11"><path d="M10 0V10H0Z" fill="#e4eef9"/></svg>
<div class="ch" style="left:853px;width:58px;background:linear-gradient(#eaf0f9,#d8e4f2);border-right-color:#9eb6ce">A</div>
<div class="ch" style="left:911px;width:37px;background:linear-gradient(#eaf0f9,#d8e4f2);border-right-color:#9eb6ce">B</div>
<div class="ch" style="left:948px;width:166px">C</div>
<div class="ch" style="left:1114px;width:32px">D</div>
<div class="ch" style="left:1146px;width:81px">E</div>
<div class="ch" style="left:1227px;width:53px">F</div>
<div class="ch" style="left:1280px;width:49px">G</div>
<div class="ch" style="left:1329px;width:89px">H</div>
<div class="ch" style="left:1418px;width:140px">I</div>
<div class="ch" style="left:1558px;width:8px;border-right:none;background:linear-gradient(#eaf0f9,#d8e4f2)"></div>
<div style="left:820px;top:228px;width:33px;height:414px;background:#dce8f6"></div>
<div class="rh" style="top:228px;height:45px"><span style="bottom:-1px">7</span></div>
<div class="rh" style="top:273px;height:40px"><span style="bottom:-1px">8</span></div>
<div class="rh" style="top:313px;height:40px;background:linear-gradient(#ffd596,#ffc46c);border-bottom-color:#d89a50"><span style="bottom:-1px">9</span></div>
<div class="rh" style="top:353px;height:40px"><span style="bottom:-1px">10</span></div>
<div class="rh" style="top:393px;height:40px"><span style="bottom:-1px">11</span></div>
<div class="rh" style="top:433px;height:40px"><span style="bottom:-1px">12</span></div>
<div class="rh" style="top:473px;height:40px"><span style="bottom:-1px">13</span></div>
<div class="rh" style="top:513px;height:70px"><span style="bottom:-1px">14</span></div>
<div class="rh" style="top:583px;height:40px"><span style="bottom:-1px">15</span></div>
<!-- yellow fills -->
<div style="left:948px;top:313px;width:610px;height:40px;background:#ff0"></div>
<div style="left:948px;top:623px;width:610px;height:19px;background:#ff0"></div>
<!-- lines -->
<div style="left:853px;top:273px;width:713px;height:1px;background:#000"></div>
<div class="hl" style="top:313px"></div><div class="hl" style="top:353px"></div><div class="hl" style="top:393px"></div><div class="hl" style="top:433px"></div><div class="hl" style="top:473px"></div><div class="hl" style="top:513px"></div><div class="hl" style="top:583px"></div><div class="hl" style="top:623px"></div>
<div style="left:911px;top:273px;width:1px;height:369px;background:#000"></div>
<div style="left:948px;top:228px;width:1px;height:414px;background:#000"></div>
<div style="left:1558px;top:228px;width:1px;height:414px;background:#000"></div>
<!-- selection -->
<div style="left:948px;top:312px;width:611px;height:42px;border:2px solid #000;outline:1px solid #fff;outline-offset:-3px"></div>
<div style="left:1556px;top:351px;width:5px;height:5px;background:#000;border:1px solid #fff"></div>
<!-- headings -->
<div class="ctr" style="left:900px;top:232px;width:90px;text-align:center;font:bold 16.500px/20px 'Noto Serif CJK SC',serif;color:#000">工艺流程<br>指示</div>
<div class="ctr" style="left:882px;top:470px;width:60px;text-align:center;font:bold 14.500px/18px 'Liberation Mono',monospace;color:#000">CAM</div>
<div class="ctr" style="left:882px;top:488px;width:60px;text-align:center;font:bold 16px/18px 'Noto Serif CJK SC',serif;color:#000">指示</div>
<div class="num" style="top:284px">1</div><div class="num" style="top:324px">2</div><div class="num" style="top:364px">3</div><div class="num" style="top:404px">4</div><div class="num" style="top:444px">5</div><div class="num" style="top:484px">6</div><div class="num" style="top:539px">7</div><div class="num" style="top:595px">8</div>
<div style="left:911px;top:630px;width:37px;height:12px;overflow:hidden"><div class="num" style="left:0;top:5px">9</div></div>
<div class="cell" style="left:952px;top:284px">字符清优化:允许顶层字符脱落模糊</div>
<div class="cell" style="left:952px;top:324px">附图所示gm1层箭头所指焊盘删除制作</div>
<div class="cell" style="left:952px;top:364px">非金属槽内均均按允许漏铜制作</div>
<div class="cell" style="left:952px;top:404px">顶层阻焊按文件制作，</div>
<div class="cell" style="left:1093px;top:404px">板边不需加印绿油来减少毛刺</div>
<div class="cell" style="left:952px;top:444px">删除BGA区域过孔两面独立阻焊开窗阻焊塞孔制作</div>
<div class="cell" style="left:952px;top:484px">附图所示钻孔均加比焊盘大的阻焊开窗不盖油制作</div>
<div class="cell" style="left:952px;top:531px">间距不足允许开通窗不保证阻焊桥制作；阻焊开窗打在骨架客户设计未开通窗的且间距大于6mil</div>
<div class="cell" style="left:952px;top:548px">的均允许削焊盘保证阻焊桥制作</div>
<div class="cell" style="left:952px;top:594px">板边均按允许漏铜制作</div>
<div style="left:952px;top:624px;height:18px;width:600px;overflow:hidden"><div class="cell" style="left:0;top:10px">附图所示箭头所指钻孔删除制作</div></div>
<div style="left:1561px;top:325px;width:5px;height:16px;overflow:hidden;border-left:1px solid #800080;border-top:1px solid #800080;border-bottom:1px solid #800080"></div>
<div style="left:1561px;top:487px;width:5px;height:16px;overflow:hidden;border-left:1px solid #800080;border-top:1px solid #800080;border-bottom:1px solid #800080"></div>
<div style="left:1561px;top:637px;width:5px;height:5px;border-left:1px solid #800080;border-top:1px solid #800080"></div>
<!-- red box -->
<div style="left:1082px;top:390px;width:244px;height:50px;border:3px solid #cc1c1c;box-shadow:2px 2px 4px rgba(90,90,90,.5)"></div>
<!-- vertical scrollbar -->
<div style="left:1566px;top:210px;width:18px;height:432px;background:#7f9fcc"></div>
<div style="left:1569px;top:210px;width:14px;height:7px;background:#dfe9f6;border:1px solid #6a86ae"></div>
<svg style="left:1568px;top:222px" width="14" height="8"><path d="M2 7L7 2L12 7Z" fill="#2c4a70"/></svg>
<div style="left:1568px;top:258px;width:14px;height:76px;background:linear-gradient(90deg,#e8eff8,#b4c6dc);border:1px solid #8aa4c8;border-radius:2px"></div>
<svg style="left:1570px;top:290px" width="10" height="10"><path d="M1 1H9M1 3H9M1 5H9M1 7H9" stroke="#567"/></svg>
<svg style="left:1568px;top:630px" width="14" height="8"><path d="M2 1L7 6L12 1Z" fill="#2c4a70"/></svg>
<!-- sheet tabs -->
<div style="left:820px;top:642px;width:763px;height:17px;background:#9bb7dc"></div>
<div style="left:820px;top:642px;width:60px;height:17px;background:linear-gradient(#dde8f6,#c4d6ee)"></div>
<svg style="left:824px;top:645px" width="56" height="11" fill="#234e86"><path d="M0 1H2V10H0ZM8 1V10L3 5.500ZM24 1V10L19 5.500ZM35 1L40 5.500L35 10ZM50 1L55 5.500L50 10ZM53 1H55V10H53Z"/></svg>
<div style="left:884px;top:642px;width:42px;height:17px;background:linear-gradient(#eef4fb,#cfdff4);clip-path:polygon(0 0,88% 0,100% 100%,0 100%)"></div>
<div style="left:892px;top:641px;font:15px/17px 'Noto Serif CJK SC',serif;color:#15428b">指示</div>
<div class="tabtxt" style="left:937px">图1(fig1)</div>
<div class="tabtxt" style="left:1016px">图2(fig2)</div>
<div class="tabtxt" style="left:1095px">图3(fig3)</div>
<div class="tabtxt" style="left:1174px">图4(fig4)</div>
<div class="tabtxt" style="left:1253px;width:15px;overflow:hidden">图</div>
<svg style="left:926px;top:642px" width="340" height="17" fill="none" stroke="#d8e4f4"><path d="M1 16L11 2M80 16L90 2M159 16L169 2M238 16L248 2"/></svg>
<div style="left:1272px;top:644px;width:5px;height:13px;background:#dce8f6;border:1px solid #7b97bf"></div>
<svg style="left:1283px;top:646px" width="10" height="10"><path d="M8 0V9L2 4.500Z" fill="#3a5a86"/></svg>
<div style="left:1293px;top:644px;width:22px;height:13px;background:linear-gradient(#f0f5fb,#bfd0e8);border:1px solid #8aa4c8;border-radius:2px;text-align:center;font:8px/11px 'Liberation Sans',sans-serif;color:#567">||||</div>
<svg style="left:1546px;top:646px" width="10" height="10"><path d="M2 0V9L8 4.500Z" fill="#3a5a86"/></svg>
<div style="left:1560px;top:644px;width:5px;height:13px;background:#dce8f6;border:1px solid #7b97bf"></div>
<!-- status bar -->
<div style="left:820px;top:659px;width:763px;height:21px;background:linear-gradient(#d8e6f7,#bcd2ee 50%,#c8daf2);border-top:1px solid #eaf1fa"></div>
<div class="ui" style="left:827px;top:661px;color:#15428b">就绪</div>
<div style="left:859px;top:660px;width:1px;height:20px;background:#9eb6d6"></div>
<div style="left:1317px;top:660px;width:1px;height:20px;background:#9eb6d6"></div>
<div style="left:1323px;top:660px;width:56px;height:18px;background:#c4d6ee;border-radius:2px;border:1px solid #9eb6d6"></div>
<div class="o" style="left:1323px;top:660px;width:18px;height:18px"></div>
<svg style="left:1325px;top:661px" width="54" height="16" fill="none" stroke="#4a6a8a"><rect x="2" y="3" width="11" height="10" stroke="#664"/><path d="M2 6H13M2 9.500H13M6 3V13M10 3V13" stroke="#664"/><rect x="20" y="3" width="11" height="10" fill="#eee"/><rect x="23" y="6" width="5" height="5"/><path d="M38 3H49V13H38Z" fill="#fff"/><path d="M42 3V9H46V3"/></svg>
<div class="ui" style="left:1387px;top:661px;font-size:13px">100%</div>
<svg style="left:1427px;top:660px" width="150" height="20"><path d="M20 10H120" stroke="#fff"/><path d="M20 11H120" stroke="#90a8c8"/><circle cx="9" cy="10" r="7" fill="#dce7f5" stroke="#8aa0be" stroke-width="1.500"/><path d="M5 10H13" stroke="#456" stroke-width="2"/><circle cx="127" cy="10" r="7" fill="#dce7f5" stroke="#8aa0be" stroke-width="1.500"/><path d="M123 10H131M127 6V14" stroke="#456" stroke-width="2"/><path d="M62 4H72V12L67 16L62 12Z" fill="#e4edf8" stroke="#6a84a8"/><path d="M141 12h1M145 12h1M145 8h1M145 16h1M141 16h1M137 16h1" stroke="#567" stroke-width="2"/></svg>

<!-- taskbar -->
<div style="left:0;top:801px;width:1600px;height:31px;background:linear-gradient(#3e6e92,#244e72 50%,#1d4468)"></div>
<svg style="left:6px;top:795px" width="44" height="37"><defs><radialGradient id="orb" cx=".5" cy=".35" r=".7"><stop offset="0" stop-color="#9fc8e8"/><stop offset=".6" stop-color="#2a6aa0"/><stop offset="1" stop-color="#173c60"/></radialGradient></defs><circle cx="21" cy="21" r="19.500" fill="url(#orb)" stroke="#c8d8e4"/><path d="M12 13Q17 11 20 13L19 20Q15 18 11 20Z" fill="#e04828"/><path d="M22 14Q26 16 31 13L30 21Q25 23 21 21Z" fill="#7cc030"/><path d="M11 22Q15 20 19 22L18 29Q14 27 10 29Z" fill="#2c8ad8"/><path d="M21 23Q25 25 30 23L29 30Q24 32 20 30Z" fill="#f4c020"/></svg>
<div class="tb" style="left:60px;width:95px;padding-left:25px"><svg style="left:6px;top:4px" width="16" height="18"><path d="M13 3Q4 1 3 10Q4 17 12 15L13 9H8" fill="none" stroke="#d8381c" stroke-width="3"/></svg>Foxmail</div>
<svg style="left:168px;top:808px" width="18" height="20"><rect x="2" y="2" width="13" height="16" fill="#eee"/><path d="M8 2L3 12L9 16Z" fill="#30a040"/><path d="M9 5L15 14L9 16Z" fill="#d83020"/></svg>
<svg style="left:212px;top:806px" width="12" height="22"><rect x="1" y="1" width="10" height="20" fill="#b8c8d8" stroke="#789"/><rect x="3" y="3" width="6" height="4" fill="#e8f0f8"/><path d="M3 10h6M3 13h6M3 16h6" stroke="#567" stroke-dasharray="1 1"/></svg>
<div class="tb" style="left:241px;width:96px"><svg style="left:6px;top:3px" width="16" height="20"><rect x="1" y="1" width="14" height="17" rx="1" fill="#2a4ab0"/><rect x="4" y="1" width="8" height="5" fill="#dde"/><rect x="3" y="9" width="10" height="8" fill="#eee"/><path d="M3 11H13M3 14H13" stroke="#d03030"/></svg>Total Co...</div>
<div class="tb" style="left:339px;width:96px"><svg style="left:7px;top:4px" width="14" height="18"><rect x="1" y="1" width="12" height="16" fill="none" stroke="#dde" stroke-width="1.500"/><path d="M3 5H11M3 9H11M3 13H11" stroke="#dde" stroke-width="1.500"/></svg>制作规范 ...</div>
<div class="tb" style="left:437px;width:95px"><svg style="left:6px;top:3px" width="16" height="20"><path d="M5 1H15L14 5H8L7 9H13L12 13H6L5 19H1Z" fill="#40c080"/></svg>EDS工程...</div>
<div class="tb" style="left:535px;width:95px"><svg style="left:6px;top:3px" width="16" height="20"><path d="M8 1L10 7H16L11 11L13 18L8 14L3 18L5 11L0 7H6Z" fill="#d87020"/></svg>兴森快捷...</div>
<div class="tb" style="left:633px;width:95px"><svg style="left:5px;top:3px" width="17" height="20"><circle cx="8" cy="11" r="7" fill="#20a080" stroke="#124"/><circle cx="8" cy="11" r="3" fill="#e0e040"/><path d="M2 3H7" stroke="#ddd" stroke-width="2"/></svg>Genesis</div>
<div class="tb" style="left:732px;width:94px"><i class="x"></i>Engineer...</div>
<div class="tb" style="left:826px;width:97px;border-left:none"><i class="x"></i>Progress</div>
<div class="tb" style="left:923px;width:96px;border-left:none"><i class="x"></i>Graphic ...</div>
<div class="tb" style="left:1019px;width:97px;border-left:none"><i class="x"></i>Job Matr...</div>
<div class="tb" style="left:1116px;width:96px;border-left:none"><i class="x"></i>Graphic ...</div>
<div class="tb" style="left:1216px;width:96px;background:linear-gradient(rgba(255,255,255,.12),rgba(255,255,255,.03))"><svg style="left:7px;top:4px" width="14" height="18"><rect x="1" y="1" width="12" height="15" fill="#eef"/><rect x="3" y="3" width="6" height="7" fill="#2a9040"/><path d="M3 12H11M3 14H11" stroke="#789"/></svg>4B42103...</div>
<div class="tb" style="left:1312px;width:95px;background:linear-gradient(rgba(255,255,255,.32),rgba(255,255,255,.18))"><svg style="left:7px;top:4px" width="14" height="18"><rect x="1" y="1" width="12" height="15" fill="#eef"/><rect x="3" y="3" width="6" height="7" fill="#2a9040"/><path d="M3 12H11M3 14H11" stroke="#789"/></svg>4B42103...</div>
<svg style="left:1418px;top:803px" width="120" height="28"><rect x="2" y="12" width="16" height="11" rx="1" fill="#d0d8e0" stroke="#555"/><path d="M4 15H16M4 18H16M4 21H16" stroke="#556" stroke-dasharray="1 1"/><circle cx="32" cy="14" r="7.500" fill="#1a3ab0" stroke="#dde" stroke-width="1.500"/><text x="32" y="18" text-anchor="middle" fill="#fff" font-family="Liberation Sans" font-weight="bold" font-size="11">?</text><rect x="54" y="2" width="6" height="5" fill="none" stroke="#fff"/><rect x="51" y="5" width="6" height="5" fill="#1d4468" stroke="#fff"/><path d="M52 17H58L55 21Z" fill="#dde"/><path d="M69 17H77L73 13Z" fill="#e0e8f0"/><ellipse cx="97" cy="15" rx="8" ry="9" fill="#1a90d8"/><path d="M95 8L100 10L100 16L97 22L94 14Z" fill="#e8f4fc"/></svg>
<div style="left:1541px;top:808px;width:36px;text-align:center;font:12.500px/22px 'Liberation Sans',sans-serif;color:#eef4f8">15:08</div>
</body></html>
